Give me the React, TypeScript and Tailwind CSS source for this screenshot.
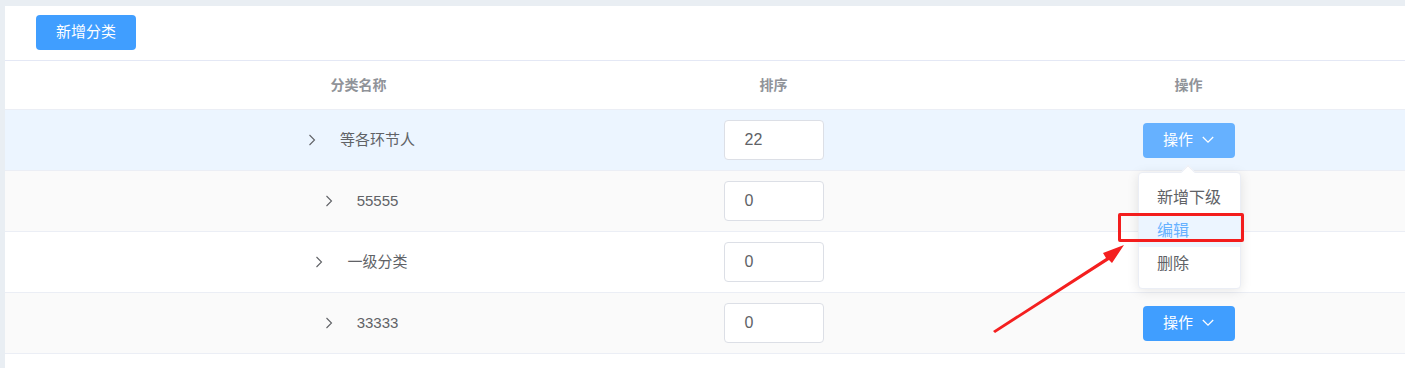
interface Row {
  name: string
  sort: string
  bg: string
  btn: string
}

const rows: Row[] = [
  { name: '等各环节人', sort: '22', bg: 'bg-[#ecf5ff]', btn: 'bg-[#66b1ff]' },
  { name: '55555', sort: '0', bg: 'bg-[#fafafa]', btn: '' },
  { name: '一级分类', sort: '0', bg: 'bg-white', btn: '' },
  { name: '33333', sort: '0', bg: 'bg-[#fafafa]', btn: 'bg-[#409eff]' },
]

function ArrowRight() {
  return (
    <svg width="20" height="14" viewBox="0 0 20 14" className="shrink-0">
      <path d="M7.5 2 L12.5 7 L7.5 12" fill="none" stroke="#606266" strokeWidth="1.1" />
    </svg>
  )
}

function Caret() {
  return (
    <svg width="12" height="8" viewBox="0 0 12 8">
      <path d="M0.8 1 L6 6.2 L11.2 1" fill="none" stroke="white" strokeWidth="1.3" />
    </svg>
  )
}

export default function App() {
  const font = { fontFamily: '"Liberation Sans", "Noto Sans CJK SC", sans-serif' }

  return (
    <div className="relative min-h-[368px] bg-[#e9eef3] pl-[5px] pt-[6px]" style={font}>
      <div className="bg-white min-h-[362px]">
        {/* toolbar */}
        <div className="h-[55px] pl-[31px] pt-[9px] border-b border-[#e4e8f5]">
          <button className="w-[100px] h-[35px] rounded bg-[#409eff] text-white text-[15px]">新增分类</button>
        </div>

        {/* header */}
        <div className="grid grid-cols-[146px_415px_415px_415px_1fr] h-[49px] items-center border-b border-[#ebeef5] text-[14px] font-bold text-[#909399]">
          <div />
          <div className="text-center">分类名称</div>
          <div className="text-center">排序</div>
          <div className="text-center">操作</div>
          <div />
        </div>

        {/* body */}
        {rows.map((r) => (
          <div
            key={r.name}
            className={`grid grid-cols-[146px_415px_415px_415px_1fr] h-[61px] items-center border-b border-[#ebeef5] text-[15px] text-[#606266] ${r.bg}`}
          >
            <div />
            <div className="flex justify-center">
              <div className="flex items-center">
                <ArrowRight />
                <span className="ml-[18px]">{r.name}</span>
              </div>
            </div>
            <div className="flex justify-center">
              <div className="w-[100px] h-[40px] rounded border border-[#dcdfe6] bg-white flex items-center pl-[20px] text-[16px] text-[#606266]">
                {r.sort}
              </div>
            </div>
            <div className="flex justify-center">
              {r.btn ? (
                <button className={`w-[92px] h-[35px] rounded ${r.btn} text-white text-[15px] flex items-center justify-center gap-[9px]`}>
                  操作
                  <Caret />
                </button>
              ) : null}
            </div>
            <div />
          </div>
        ))}
      </div>

      {/* dropdown menu */}
      <div className="absolute left-[1138px] top-[172px] w-[103px] rounded bg-white border border-[#ebeef5] shadow-[0_2px_12px_rgba(0,0,0,0.1)] py-[8px] text-[16px] text-[#606266]">
        <div className="absolute -top-[6px] left-[44px] w-[10px] h-[10px] rotate-45 bg-white border-l border-t border-[#ebeef5]" />
        <div className="h-[33px] flex items-center pl-[18px]">新增下级</div>
        <div className="h-[33px] flex items-center pl-[18px] bg-[#ecf5ff] text-[#66b1ff]">编辑</div>
        <div className="h-[33px] flex items-center pl-[18px]">删除</div>
      </div>

      {/* annotation */}
      <div className="absolute left-[1118px] top-[213px] w-[126px] h-[29px] border-[3px] border-[#f31d1d] rounded-[2px]" />
      <svg className="absolute left-[990px] top-[240px]" width="140" height="95" viewBox="0 0 140 95">
        <polygon points="3,91 116,18 113,13 134,5 122,23 119,20 5,93" fill="#f41f1f" />
      </svg>
    </div>
  )
}
